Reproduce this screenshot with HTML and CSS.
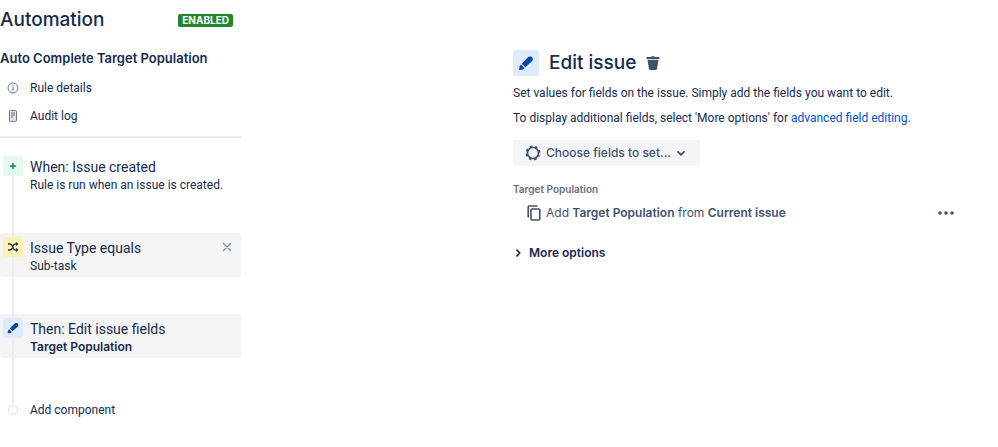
FILE: index.html
```
<!DOCTYPE html>
<html lang="en">
  <head>
    <meta charset="UTF-8" />
    <meta name="viewport" content="width=device-width, initial-scale=1.0" />
    <title>Automation</title>
    <link rel="stylesheet" href="styles.css" />
  </head>
  <body>
    <div class="layout">
      <aside class="sidebar">
        <header class="sidebar-header">
          <h1>Automation</h1>
          <span class="badge">ENABLED</span>
        </header>
        <h2 class="rule-name">Auto Complete Target Population</h2>

        <nav class="rule-nav">
          <a class="nav-link" href="#details">
            <svg class="nav-icon" width="12" height="12" viewBox="0 0 12 12" fill="none" stroke="currentColor">
              <circle cx="6" cy="6" r="5" />
              <path d="M6 5.3v3.2M6 3.2v1.2" stroke-width="1.2" />
            </svg>
            Rule details
          </a>
          <a class="nav-link" href="#audit">
            <svg class="nav-icon" width="12" height="12" viewBox="0 0 12 12" fill="none" stroke="currentColor">
              <rect x="2.5" y="0.6" width="7" height="10.8" rx="0.8" fill="#dfe1e6" />
              <path d="M4 3h4M4 5h4M4 7h2" />
            </svg>
            Audit log
          </a>
        </nav>

        <ol class="steps">
          <li class="step">
            <span class="step-icon green">
              <svg width="20" height="20" viewBox="0 0 20 20" fill="none" stroke="currentColor" stroke-width="1.5">
                <path d="M10 7.500v5M7.500 10h5" stroke-linecap="round" />
              </svg>
            </span>
            <div class="step-text">
              <h3>When: Issue created</h3>
              <p>Rule is run when an issue is created.</p>
            </div>
          </li>
          <li class="step card">
            <span class="step-icon yellow">
              <svg width="20" height="20" viewBox="0 0 20 20" fill="none" stroke="currentColor" stroke-width="1.3">
                <path d="M5 7h2c1 0 1.500.6 2 1.500l1.400 3c.5 1 1 1.500 2 1.500h1.200M5 13h2c1 0 1.500-.6 2-1.500l1.400-3c.5-1 1-1.500 2-1.500h1.200" />
                <path d="M13 5l2.400 2L13 9zM13 11l2.400 2-2.400 2z" fill="currentColor" stroke="none" />
              </svg>
            </span>
            <div class="step-text">
              <h3>Issue Type equals</h3>
              <p>Sub-task</p>
            </div>
            <button class="remove-btn" aria-label="Remove">
              <svg width="10" height="10" viewBox="0 0 10 10" fill="none" stroke="currentColor" stroke-width="1.4">
                <path d="M1.500 1.500l7 7M8.500 1.500l-7 7" stroke-linecap="round" />
              </svg>
            </button>
          </li>
          <li class="step card">
            <span class="step-icon blue">
              <svg width="20" height="20" viewBox="0 0 26 26" fill="currentColor">
                <path d="M7.900 14.500l3.600 3.600-1.700 1.300-3.100.5c-.4.1-.7-.2-.6-.6l.5-3.100zM8.700 13.700l6.500-6.600c.4-.4.9-.6 1.500-.6h.9c1 0 2.200 1.200 2.200 2.200v.8c0 .6-.2 1.100-.6 1.500L12.400 17.300z" />
              </svg>
            </span>
            <div class="step-text">
              <h3>Then: Edit issue fields</h3>
              <p><strong>Target Population</strong></p>
            </div>
          </li>
        </ol>
        <button class="add-step"><span class="dot"></span>Add component</button>
      </aside>

      <main class="content">
        <div class="title-row">
          <span class="title-icon blue">
            <svg width="26" height="26" viewBox="0 0 26 26" fill="currentColor">
              <path d="M7.900 14.500l3.600 3.600-1.700 1.300-3.100.5c-.4.1-.7-.2-.6-.6l.5-3.100zM8.700 13.700l6.500-6.600c.4-.4.9-.6 1.500-.6h.9c1 0 2.200 1.200 2.200 2.200v.8c0 .6-.2 1.100-.6 1.500L12.400 17.300z" />
            </svg>
          </span>
          <h2>Edit issue</h2>
          <button class="delete-btn" aria-label="Delete">
            <svg width="14" height="14" viewBox="0 0 14 14" fill="currentColor">
              <path d="M.5 1.700C.5 1.300.8 1 1.200 1H5l.7-.8h2.600L9 1h3.800c.4 0 .7.300.7.700v1.200H.5zM1.500 3.800h11l-1.400 8.900c-.1.700-.7 1.200-1.400 1.200H4.300c-.7 0-1.300-.5-1.400-1.200z" />
            </svg>
          </button>
        </div>
        <p>Set values for fields on the issue. Simply add the fields you want to edit.</p>
        <p>
          To display additional fields, select 'More options' for
          <a href="#advanced">advanced field editing</a>.
        </p>

        <button class="choose-btn">
          <svg width="16" height="16" viewBox="0 0 16 16" fill="none" stroke="currentColor">
            <circle cx="8" cy="8" r="5.500" stroke-width="1.600" />
            <circle cx="8" cy="8" r="6.500" stroke-width="2" stroke-dasharray="2.600 2.505" stroke-dashoffset="1.300" transform="rotate(22.500 8 8)" />
          </svg>
          Choose fields to set...
          <svg width="10" height="10" viewBox="0 0 10 10" fill="none" stroke="currentColor" stroke-width="1.700">
            <path d="M2 3.800l3 3 3-3" stroke-linecap="round" stroke-linejoin="round" />
          </svg>
        </button>

        <h4 class="field-label">Target Population</h4>
        <div class="field-row">
          <svg width="14" height="16" viewBox="0 0 14 16" fill="none" stroke="currentColor" stroke-width="1.600">
            <rect x="4" y="4" width="8.800" height="11" rx="1" />
            <path d="M1.200 12V2c0-.6.4-1 1-1H10" stroke-linecap="round" />
          </svg>
          <span class="field-text">Add <strong>Target Population</strong> from <strong>Current issue</strong></span>
          <button class="more-btn" aria-label="More actions">
            <svg width="16" height="4" viewBox="0 0 16 4" fill="currentColor">
              <circle cx="2" cy="2" r="1.800" />
              <circle cx="8" cy="2" r="1.800" />
              <circle cx="14" cy="2" r="1.800" />
            </svg>
          </button>
        </div>

        <button class="options-btn">
          <svg width="10" height="10" viewBox="0 0 10 10" fill="none" stroke="currentColor" stroke-width="1.700">
            <path d="M4 2.200L6.800 5 4 7.800" stroke-linecap="round" stroke-linejoin="round" />
          </svg>
          More options
        </button>
      </main>
    </div>
  </body>
</html>
```
FILE: styles.css
```
* {
  box-sizing: border-box;
}

body {
  margin: 0;
  background-color: white;
  color: #172b4d;
  font-family: Roboto, "Liberation Sans", sans-serif;
  font-size: 12px;
  line-height: 16px;
}

h1,
h2,
h3,
h4,
p,
ol {
  margin: 0;
  padding: 0;
}

h1,
h2,
h4,
strong,
.badge,
.choose-btn,
.field-row,
.options-btn {
  font-family: Inter, "Liberation Sans", sans-serif;
}

button {
  display: flex;
  align-items: center;
  margin: 0;
  padding: 0;
  border: 0;
  background: none;
  color: inherit;
  font-size: 12px;
  font-family: inherit;
  line-height: 16px;
  cursor: pointer;
}

svg {
  display: block;
  flex: none;
}

.layout {
  display: grid;
  grid-template-columns: 241px 1fr;
}

/* sidebar */
.sidebar-header {
  display: flex;
  align-items: center;
  justify-content: space-between;
  padding: 8px 8px 0 0;
}

.sidebar-header h1 {
  font-size: 19px;
  font-weight: 500;
  line-height: 24px;
}

.badge {
  padding: 0 4px;
  border-radius: 2px;
  background-color: #22872a;
  color: white;
  font-size: 10px;
  font-weight: 700;
  line-height: 13px;
}

.rule-name {
  padding-top: 18px;
  font-size: 13px;
  font-weight: 600;
  white-space: nowrap;
}

.rule-nav {
  display: flex;
  flex-direction: column;
  gap: 12px;
  padding: 14px 0 12px;
  border-bottom: 2px solid #ebecf0;
}

.nav-link {
  display: flex;
  align-items: center;
  gap: 11px;
  padding-left: 7px;
  color: inherit;
  text-decoration: none;
}

.nav-icon {
  color: #6b778c;
}

.steps {
  display: flex;
  flex-direction: column;
  gap: 37px;
  padding-top: 14px;
  list-style: none;
}

.step {
  position: relative;
  display: flex;
  gap: 7px;
  height: 44px;
  padding: 4px 9px 4px 3px;
}

/* connector down to the next step */
.step::before {
  content: "";
  position: absolute;
  top: 24px;
  left: 12px;
  width: 2px;
  height: 81px;
  background-color: #ebecf0;
  z-index: 1;
}

.step:last-child::before {
  height: 66px;
}

.card {
  border-radius: 3px;
  background-color: #f4f4f4;
}

.step-icon {
  position: relative;
  z-index: 2;
  width: 20px;
  height: 20px;
  border-radius: 2px;
}

.green {
  background-color: #e3fcef;
  color: #1f7a53;
}

.yellow {
  background-color: #fff0b3;
  color: #172b4d;
}

.blue {
  background-color: #deebff;
  color: #0747a6;
}

.step-text {
  flex: 1;
  padding-top: 1px;
  white-space: nowrap;
}

.step-text h3 {
  font-size: 14px;
  font-weight: 400;
  line-height: 20px;
}

strong {
  font-weight: 600;
}

.remove-btn {
  height: 20px;
  color: #8993a4;
}

.add-step {
  gap: 12px;
  margin-top: 44px;
  padding-left: 8px;
}

.dot {
  width: 10px;
  height: 10px;
  border: 1px solid #dfe1e6;
  border-radius: 50%;
  background-color: white;
}

/* content */
.content {
  display: flex;
  flex-direction: column;
  align-items: flex-start;
  padding: 50px 44px 0 272px;
}

.title-row {
  display: flex;
  align-items: center;
  gap: 10px;
  margin-bottom: 9px;
}

.title-row h2 {
  font-size: 19px;
  font-weight: 500;
  line-height: 26px;
}

.title-icon {
  border-radius: 2px;
}

.delete-btn {
  color: #42526e;
}

.content p {
  margin-bottom: 9px;
}

.content a {
  color: #0052cc;
  text-decoration: none;
}

.choose-btn {
  gap: 5px;
  height: 26px;
  margin-top: 5px;
  padding: 0 14px 0 12px;
  border-radius: 2px;
  background-color: #f4f5f7;
  color: #42526e;
  font-weight: 500;
}

.field-label {
  margin-top: 15px;
  color: #6b6e76;
  font-size: 10px;
  font-weight: 600;
}

.field-row {
  display: flex;
  align-items: center;
  align-self: stretch;
  gap: 5px;
  margin-top: 8px;
  padding-left: 14px;
  color: #42526e;
}

.field-text {
  flex: 1;
}

.options-btn {
  gap: 6px;
  margin-top: 24px;
  font-weight: 600;
}
```
